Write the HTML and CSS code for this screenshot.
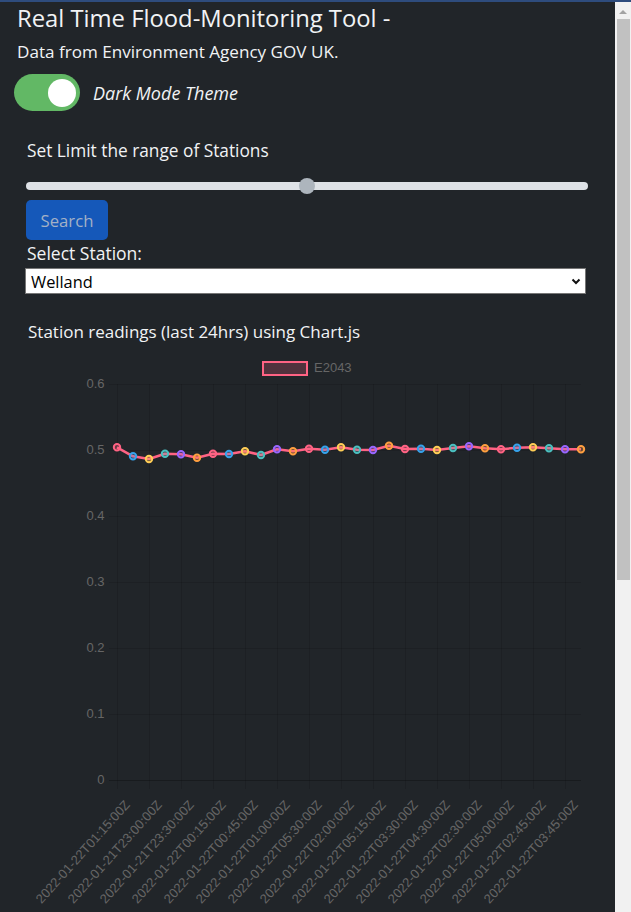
FILE: index.html
```html
<!DOCTYPE html>
<html>
<head>
<meta charset="utf-8">
<link rel="stylesheet" href="styles.css">
</head>
<body>
<div class="main">
  <header class="header">
    <h1 class="title">Real Time Flood-Monitoring Tool -</h1>
    <p class="subtitle">Data from Environment Agency GOV UK.</p>
    <div class="theme-row">
      <span class="switch"><span class="knob"></span></span>
      <em class="theme-label">Dark Mode Theme</em>
    </div>
  </header>
  <section class="controls">
    <p class="range-label">Set Limit the range of Stations</p>
    <input class="range" type="range" min="0" max="100" value="50">
    <button class="btn">Search</button>
    <label class="select-label" for="st">Select Station:</label>
    <div class="select-wrap">
      <select id="st" class="select"><option>Welland</option></select>
      <svg class="chev" width="10" height="7" viewBox="0 0 10 7"><path d="M1.5 1.5 L5 5 L8.5 1.5" fill="none" stroke="#111" stroke-width="2"/></svg>
    </div>
    <p class="chart-title">Station readings (last 24hrs) using Chart.js</p>
  </section>
  <div class="chart">
    <svg width="615" height="562" viewBox="0 350 615 562" font-family="'Liberation Sans', Arial, sans-serif" font-size="13">
      <rect x="263" y="362" width="44" height="13" fill="rgba(255,99,132,0.22)" stroke="#ff6384" stroke-width="2"/>
      <text x="314" y="371.5" fill="#666">E2043</text>
      <g stroke="rgba(0,0,0,0.12)" stroke-width="1">
        <line x1="109" y1="384.5" x2="581" y2="384.5"/>
        <line x1="109" y1="450.5" x2="581" y2="450.5"/>
        <line x1="109" y1="516.5" x2="581" y2="516.5"/>
        <line x1="109" y1="582.5" x2="581" y2="582.5"/>
        <line x1="109" y1="648.5" x2="581" y2="648.5"/>
        <line x1="109" y1="714.5" x2="581" y2="714.5"/>
        <line x1="117.5" y1="384" x2="117.5" y2="789"/>
        <line x1="149.5" y1="384" x2="149.5" y2="789"/>
        <line x1="181.5" y1="384" x2="181.5" y2="789"/>
        <line x1="213.5" y1="384" x2="213.5" y2="789"/>
        <line x1="245.5" y1="384" x2="245.5" y2="789"/>
        <line x1="277.5" y1="384" x2="277.5" y2="789"/>
        <line x1="309.5" y1="384" x2="309.5" y2="789"/>
        <line x1="341.5" y1="384" x2="341.5" y2="789"/>
        <line x1="373.5" y1="384" x2="373.5" y2="789"/>
        <line x1="405.5" y1="384" x2="405.5" y2="789"/>
        <line x1="437.5" y1="384" x2="437.5" y2="789"/>
        <line x1="469.5" y1="384" x2="469.5" y2="789"/>
        <line x1="501.5" y1="384" x2="501.5" y2="789"/>
        <line x1="533.5" y1="384" x2="533.5" y2="789"/>
        <line x1="565.5" y1="384" x2="565.5" y2="789"/>
      </g>
      <line x1="109" y1="780.5" x2="581" y2="780.5" stroke="rgba(0,0,0,0.25)"/>
      <g fill="#666" text-anchor="end" dominant-baseline="middle">
        <text x="104.5" y="384.5">0.6</text>
        <text x="104.5" y="450.5">0.5</text>
        <text x="104.5" y="516.5">0.4</text>
        <text x="104.5" y="582.5">0.3</text>
        <text x="104.5" y="648.5">0.2</text>
        <text x="104.5" y="714.5">0.1</text>
        <text x="104.5" y="780.5">0</text>
      </g>
      <polyline fill="none" stroke="#ff6384" stroke-width="2.5" stroke-linejoin="round" points="117,447.3 133,456.3 149,459 165,453.7 181,454.3 197,457.7 213,453.7 229,454 245,451.3 261,455 277,449.3 293,451.3 309,448.7 325,449.7 341,447.3 357,449.7 373,450 389,445.7 405,449 421,448.7 437,450 453,448 469,446.3 485,448.3 501,449.3 517,447.7 533,447.3 549,448.3 565,449.3 581,449.3"/>
      <g stroke-width="2">
        <circle cx="117" cy="447.3" r="3.2" stroke="#ff6384" fill="rgba(255,99,132,0.3)"/>
        <circle cx="133" cy="456.3" r="3.2" stroke="#36a2eb" fill="rgba(54,162,235,0.3)"/>
        <circle cx="149" cy="459" r="3.2" stroke="#ffcd56" fill="rgba(255,205,86,0.3)"/>
        <circle cx="165" cy="453.7" r="3.2" stroke="#4bc0c0" fill="rgba(75,192,192,0.3)"/>
        <circle cx="181" cy="454.3" r="3.2" stroke="#9966ff" fill="rgba(153,102,255,0.3)"/>
        <circle cx="197" cy="457.7" r="3.2" stroke="#ff9f40" fill="rgba(255,159,64,0.3)"/>
        <circle cx="213" cy="453.7" r="3.2" stroke="#ff6384" fill="rgba(255,99,132,0.3)"/>
        <circle cx="229" cy="454" r="3.2" stroke="#36a2eb" fill="rgba(54,162,235,0.3)"/>
        <circle cx="245" cy="451.3" r="3.2" stroke="#ffcd56" fill="rgba(255,205,86,0.3)"/>
        <circle cx="261" cy="455" r="3.2" stroke="#4bc0c0" fill="rgba(75,192,192,0.3)"/>
        <circle cx="277" cy="449.3" r="3.2" stroke="#9966ff" fill="rgba(153,102,255,0.3)"/>
        <circle cx="293" cy="451.3" r="3.2" stroke="#ff9f40" fill="rgba(255,159,64,0.3)"/>
        <circle cx="309" cy="448.7" r="3.2" stroke="#ff6384" fill="rgba(255,99,132,0.3)"/>
        <circle cx="325" cy="449.7" r="3.2" stroke="#36a2eb" fill="rgba(54,162,235,0.3)"/>
        <circle cx="341" cy="447.3" r="3.2" stroke="#ffcd56" fill="rgba(255,205,86,0.3)"/>
        <circle cx="357" cy="449.7" r="3.2" stroke="#4bc0c0" fill="rgba(75,192,192,0.3)"/>
        <circle cx="373" cy="450" r="3.2" stroke="#9966ff" fill="rgba(153,102,255,0.3)"/>
        <circle cx="389" cy="445.7" r="3.2" stroke="#ff9f40" fill="rgba(255,159,64,0.3)"/>
        <circle cx="405" cy="449" r="3.2" stroke="#ff6384" fill="rgba(255,99,132,0.3)"/>
        <circle cx="421" cy="448.7" r="3.2" stroke="#36a2eb" fill="rgba(54,162,235,0.3)"/>
        <circle cx="437" cy="450" r="3.2" stroke="#ffcd56" fill="rgba(255,205,86,0.3)"/>
        <circle cx="453" cy="448" r="3.2" stroke="#4bc0c0" fill="rgba(75,192,192,0.3)"/>
        <circle cx="469" cy="446.3" r="3.2" stroke="#9966ff" fill="rgba(153,102,255,0.3)"/>
        <circle cx="485" cy="448.3" r="3.2" stroke="#ff9f40" fill="rgba(255,159,64,0.3)"/>
        <circle cx="501" cy="449.3" r="3.2" stroke="#ff6384" fill="rgba(255,99,132,0.3)"/>
        <circle cx="517" cy="447.7" r="3.2" stroke="#36a2eb" fill="rgba(54,162,235,0.3)"/>
        <circle cx="533" cy="447.3" r="3.2" stroke="#ffcd56" fill="rgba(255,205,86,0.3)"/>
        <circle cx="549" cy="448.3" r="3.2" stroke="#4bc0c0" fill="rgba(75,192,192,0.3)"/>
        <circle cx="565" cy="449.3" r="3.2" stroke="#9966ff" fill="rgba(153,102,255,0.3)"/>
        <circle cx="581" cy="449.3" r="3.2" stroke="#ff9f40" fill="rgba(255,159,64,0.3)"/>
      </g>
      <g fill="#666" text-anchor="end" dominant-baseline="middle">
        <text transform="translate(128 803) rotate(-48)">2022-01-22T01:15:00Z</text>
        <text transform="translate(160 803) rotate(-48)">2022-01-21T23:00:00Z</text>
        <text transform="translate(192 803) rotate(-48)">2022-01-21T23:30:00Z</text>
        <text transform="translate(224 803) rotate(-48)">2022-01-22T00:15:00Z</text>
        <text transform="translate(256 803) rotate(-48)">2022-01-22T00:45:00Z</text>
        <text transform="translate(288 803) rotate(-48)">2022-01-22T01:00:00Z</text>
        <text transform="translate(320 803) rotate(-48)">2022-01-22T05:30:00Z</text>
        <text transform="translate(352 803) rotate(-48)">2022-01-22T02:00:00Z</text>
        <text transform="translate(384 803) rotate(-48)">2022-01-22T05:15:00Z</text>
        <text transform="translate(416 803) rotate(-48)">2022-01-22T03:30:00Z</text>
        <text transform="translate(448 803) rotate(-48)">2022-01-22T04:30:00Z</text>
        <text transform="translate(480 803) rotate(-48)">2022-01-22T02:30:00Z</text>
        <text transform="translate(512 803) rotate(-48)">2022-01-22T05:00:00Z</text>
        <text transform="translate(544 803) rotate(-48)">2022-01-22T02:45:00Z</text>
        <text transform="translate(576 803) rotate(-48)">2022-01-22T03:45:00Z</text>
      </g>
    </svg>
  </div>
</div>
<div class="scrollbar">
  <span class="sb-arrow"></span>
  <span class="sb-thumb"></span>
</div>
</body>
</html>
```
FILE: styles.css
```css
html, body { margin: 0; padding: 0; }
body {
  background: #212529;
  color: #f1f3f5;
  font-family: "Open Sans", sans-serif;
  border-top: 2px solid #2e4c7d;
  height: 910px;
  overflow: hidden;
  display: flex;
}
.main { flex: 1; min-width: 0; }
.header { padding: 2px 17px 0; }
.title { font-size: 23.8px; line-height: 28px; font-weight: 400; margin: 0; }
.subtitle { font-size: 17.1px; line-height: 22px; margin: 9px 0 0; }
.theme-row { display: flex; align-items: center; gap: 13px; margin: 11px 0 0 -3px; }
.switch { width: 66px; height: 37px; border-radius: 19px; background: #62b865; display: flex; justify-content: flex-end; align-items: center; padding: 0 4px; box-sizing: border-box; }
.knob { width: 28px; height: 28px; border-radius: 50%; background: #fff; }
.theme-label { font-size: 18px; line-height: 22px; }
.controls { padding: 0 26px; }
.range-label { font-size: 17.3px; line-height: 22px; margin: 28.5px 0 0 1px; }
.range { -webkit-appearance: none; appearance: none; display: block; width: 562px; height: 24px; margin: 12.5px 0 0; padding: 0; background: transparent; }
.range::-webkit-slider-runnable-track { height: 8px; border-radius: 4px; background: #dee2e6; }
.range::-webkit-slider-thumb { -webkit-appearance: none; width: 16px; height: 16px; border-radius: 50%; background: #adb5bd; margin-top: -4px; border: 0; }
.btn { display: block; margin: 2px 0 0; width: 82px; height: 40px; border: 0; border-radius: 5px; background: #1558b9; color: #a3b1c6; font-family: inherit; font-size: 16.7px; padding: 0; }
.select-label { display: block; font-size: 17.5px; line-height: 22px; margin: 2px 0 0 1px; }
.select-wrap { position: relative; width: 561px; margin: 4px 0 0 -1px; }
.select { -webkit-appearance: none; appearance: none; display: block; width: 100%; height: 26px; border: 1px solid #767676; border-radius: 0; background: #fff; color: #000; font-family: inherit; font-size: 16.4px; padding: 0 0 0 5px; }
.chev { position: absolute; right: 5px; top: 10px; pointer-events: none; }
.chart-title { font-size: 17px; line-height: 22px; margin: 27.4px 0 0 2px; }
.chart { margin-top: 6.6px; }
.chart svg { display: block; }
.scrollbar { width: 16px; flex: none; background: #f1f1f1; display: flex; flex-direction: column; align-items: flex-end; }
.sb-arrow { width: 0; height: 0; border-left: 4px solid transparent; border-right: 4px solid transparent; border-bottom: 4px solid #a3a3a3; margin: 8px 4px 0 0; }
.sb-thumb { width: 13px; height: 561px; background: #c1c1c1; margin: 5px 1px 0 0; }
```
